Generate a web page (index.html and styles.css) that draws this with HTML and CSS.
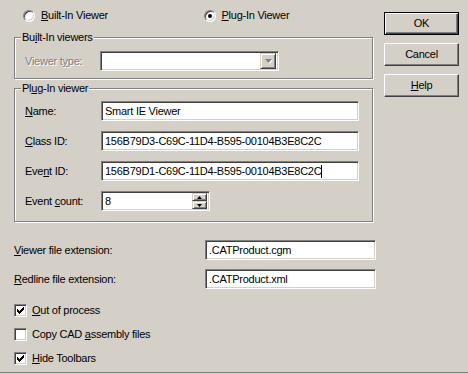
FILE: index.html
```html
<!DOCTYPE html>
<html lang="en">
<head>
  <meta charset="UTF-8">
  <title>Viewer Settings</title>
  <link rel="stylesheet" href="styles.css">
</head>
<body>
  <div class="dialog">
    <div class="main">
      <!-- Viewer mode -->
      <div class="mode">
        <label class="radio"><span class="radio-box"></span><span><u>B</u>uilt-In Viewer</span></label>
        <label class="radio"><span class="radio-box checked"></span><span><u>P</u>lug-In Viewer</span></label>
      </div>

      <!-- Built-in viewers -->
      <fieldset class="group group-builtin">
        <legend>Bu<u>i</u>lt-In viewers</legend>
        <div class="form-grid">
          <span class="label disabled">Viewer t<u>y</u>pe:</span>
          <div class="combo">
            <span class="combo-btn">
              <svg width="7" height="4" viewBox="0 0 7 4"><path d="M0 0h7l-3.5 4z" fill="#808080"/></svg>
            </span>
          </div>
        </div>
      </fieldset>

      <!-- Plug-in viewer -->
      <fieldset class="group group-plugin">
        <legend>Pl<u>u</u>g-In viewer</legend>
        <div class="form-grid">
          <span class="label"><u>N</u>ame:</span>
          <div class="edit">Smart IE Viewer</div>

          <span class="label"><u>C</u>lass ID:</span>
          <div class="edit">156B79D3-C69C-11D4-B595-00104B3E8C2C</div>

          <span class="label">Eve<u>n</u>t ID:</span>
          <div class="edit">156B79D1-C69C-11D4-B595-00104B3E8C2C<span class="caret"></span></div>

          <span class="label">Event <u>c</u>ount:</span>
          <div class="edit spin">
            <span class="spin-value">8</span>
            <span class="spin-btns">
              <span class="spin-btn"><svg width="5" height="3" viewBox="0 0 5 3"><path d="M2.5 0L5 3H0z"/></svg></span>
              <span class="spin-btn"><svg width="5" height="3" viewBox="0 0 5 3"><path d="M0 0h5L2.5 3z"/></svg></span>
            </span>
          </div>
        </div>
      </fieldset>

      <!-- Extensions -->
      <div class="ext-grid">
        <span class="label"><u>V</u>iewer file extension:</span>
        <div class="edit">.CATProduct.cgm</div>
        <span class="label"><u>R</u>edline file extension:</span>
        <div class="edit">.CATProduct.xml</div>
      </div>

      <!-- Options -->
      <div class="checks">
        <label class="check"><span class="check-box"><svg width="7" height="7" viewBox="0 0 7 7"><path d="M0 2h1v3h-1zM1 3h1v3h-1zM2 4h1v3h-1zM3 3h1v3h-1zM4 2h1v3h-1zM5 1h1v3h-1zM6 0h1v3h-1z"/></svg></span><span><u>O</u>ut of process</span></label>
        <label class="check"><span class="check-box"></span><span>Copy CAD <u>a</u>ssembly files</span></label>
        <label class="check"><span class="check-box"><svg width="7" height="7" viewBox="0 0 7 7"><path d="M0 2h1v3h-1zM1 3h1v3h-1zM2 4h1v3h-1zM3 3h1v3h-1zM4 2h1v3h-1zM5 1h1v3h-1zM6 0h1v3h-1z"/></svg></span><span><u>H</u>ide Toolbars</span></label>
      </div>
    </div>

    <div class="buttons">
      <button class="btn default">OK</button>
      <button class="btn">Cancel</button>
      <button class="btn"><u>H</u>elp</button>
    </div>
  </div>
</body>
</html>
```

FILE: styles.css
```css
body {
  margin: 0;
  background: #d4d0c8;
  font-family: 'Liberation Sans', Arial, sans-serif;
  font-size: 11px;
  line-height: 13px;
  letter-spacing: -0.25px;
  color: #000;
}
.dialog {
  display: flex;
  height: 373px;
  box-sizing: border-box;
  border-bottom: 1px solid #808080;
}
.main {
  width: 384px;
  flex: none;
}

/* radios */
.mode {
  display: flex;
  padding: 9px 0 0 23px;
}
.radio {
  display: flex;
  align-items: center;
  gap: 6px;
  width: 200px;
  height: 13px;
}
.radio-box {
  width: 10px;
  height: 10px;
  border-radius: 50%;
  border: 1px solid;
  border-color: #808080 #fff #fff #808080;
  box-shadow: inset 1px 1px 0 #404040, inset -1px -1px 0 #d4d0c8;
  background: #fff;
  display: flex;
  align-items: center;
  justify-content: center;
}
.radio-box.checked::after {
  content: "";
  width: 4px;
  height: 4px;
  border-radius: 50%;
  background: #000;
}

/* group boxes */
.group {
  box-sizing: border-box;
  width: 359px;
  margin: 0 0 0 14px;
  padding: 0 0 0 10px;
  min-width: 0;
  border: 1px solid #808080;
  box-shadow: inset 1px 1px 0 #fff, 1px 1px 0 #fff;
}
.group legend {
  padding: 0 1px;
  margin-left: -4px;
  background: #d4d0c8;
}
.group-builtin {
  margin-top: 9px;
  padding-top: 7px;
  padding-bottom: 7px;
}
.group-plugin {
  margin-top: 3px;
  padding-top: 6px;
  padding-bottom: 10px;
}
.form-grid {
  display: grid;
  grid-template-columns: 76px 258px;
  row-gap: 10px;
  align-items: center;
}
.label.disabled {
  color: #808080;
  text-shadow: 1px 1px 0 #fff;
}

/* edit fields */
.edit {
  box-sizing: border-box;
  height: 20px;
  padding: 0 3px;
  line-height: 18px;
  background: #fff;
  border: 1px solid;
  border-color: #808080 #fff #fff #808080;
  box-shadow: inset 1px 1px 0 #404040, inset -1px -1px 0 #d4d0c8;
  white-space: nowrap;
  overflow: hidden;
  display: flex;
  align-items: center;
}
.caret {
  width: 1px;
  height: 13px;
  background: #000;
}
.combo {
  box-sizing: border-box;
  width: 179px;
  height: 20px;
  margin-left: -1px;
  background: #fff;
  border: 1px solid;
  border-color: #808080 #fff #fff #808080;
  box-shadow: inset 1px 1px 0 #404040, inset -1px -1px 0 #d4d0c8;
  display: flex;
  justify-content: flex-end;
  padding: 1px 2px 1px 0;
}
.combo-btn {
  width: 16px;
  box-sizing: border-box;
  border: 1px solid;
  border-color: #d4d0c8 #404040 #404040 #d4d0c8;
  box-shadow: inset 1px 1px 0 #fff, inset -1px -1px 0 #808080;
  background: #d4d0c8;
  display: flex;
  align-items: center;
  justify-content: center;
}
.combo-btn svg {
  filter: drop-shadow(1px 1px 0 #fff);
}

/* spin box */
.spin {
  width: 109px;
  padding-right: 2px;
}
.spin-value {
  flex: 1;
}
.spin-btns {
  display: flex;
  flex-direction: column;
  width: 15px;
  height: 16px;
}
.spin-btn {
  flex: 1;
  box-sizing: border-box;
  border: 1px solid;
  border-color: #d4d0c8 #404040 #404040 #d4d0c8;
  box-shadow: inset 1px 1px 0 #fff, inset -1px -1px 0 #808080;
  background: #d4d0c8;
  display: flex;
  align-items: center;
  justify-content: center;
}

/* extensions */
.ext-grid {
  display: grid;
  grid-template-columns: 191px 171px;
  row-gap: 9px;
  align-items: center;
  margin-top: 18px;
  padding-left: 14px;
}

/* checkboxes */
.checks {
  display: flex;
  flex-direction: column;
  gap: 11px;
  margin-top: 15px;
  padding-left: 14px;
}
.check {
  display: flex;
  align-items: center;
  gap: 5px;
  height: 13px;
}
.check-box {
  box-sizing: border-box;
  width: 13px;
  height: 13px;
  background: #fff;
  border: 1px solid;
  border-color: #808080 #fff #fff #808080;
  box-shadow: inset 1px 1px 0 #404040, inset -1px -1px 0 #d4d0c8;
  display: flex;
  align-items: center;
  justify-content: center;
}

/* buttons */
.buttons {
  display: flex;
  flex-direction: column;
  gap: 8px;
  padding-top: 12px;
}
.btn {
  width: 75px;
  height: 23px;
  padding: 0;
  font: inherit;
  letter-spacing: inherit;
  color: #000;
  background: #d4d0c8;
  border: 1px solid;
  border-color: #fff #404040 #404040 #fff;
  box-shadow: inset -1px -1px 0 #808080;
}
.btn.default {
  border-color: #000;
  box-shadow: inset 1px 1px 0 #fff, inset -1px -1px 0 #404040, inset -2px -2px 0 #808080;
}
```
